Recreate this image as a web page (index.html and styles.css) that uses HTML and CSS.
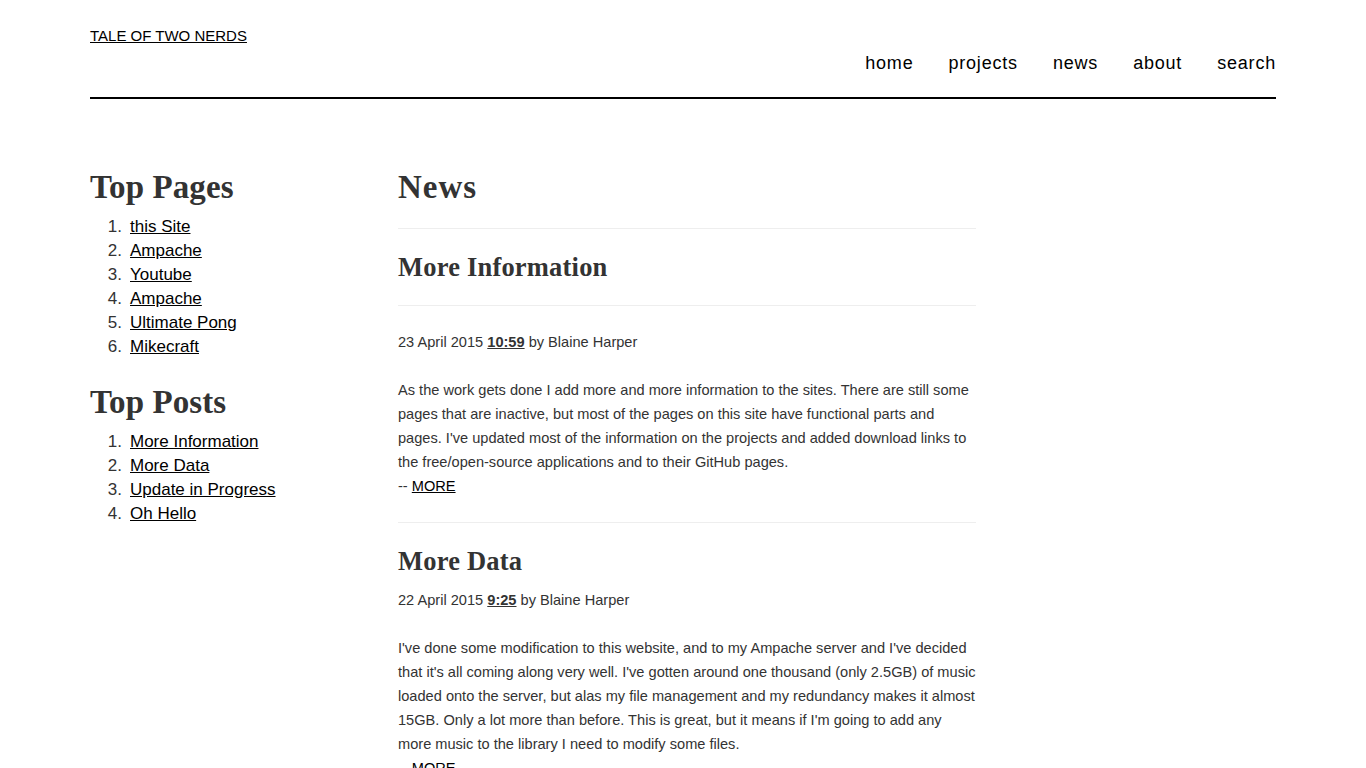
FILE: index.html
```html
<!DOCTYPE html>
<html lang="en">
<head>
<meta charset="utf-8">
<title>Tale of Two Nerds - News</title>
<link rel="stylesheet" href="styles.css">
</head>
<body>
<div class="page">
  <header class="site-header">
    <a class="logo" href="#">TALE OF TWO NERDS</a>
    <nav class="nav">
      <a href="#">home</a>
      <a href="#">projects</a>
      <a href="#">news</a>
      <a href="#">about</a>
      <a href="#">search</a>
    </nav>
  </header>
  <div class="layout">
    <aside class="sidebar">
      <h2 class="side-title">Top Pages</h2>
      <ol class="side-list">
        <li><a href="#">this Site</a></li>
        <li><a href="#">Ampache</a></li>
        <li><a href="#">Youtube</a></li>
        <li><a href="#">Ampache</a></li>
        <li><a href="#">Ultimate Pong</a></li>
        <li><a href="#">Mikecraft</a></li>
      </ol>
      <h2 class="side-title second">Top Posts</h2>
      <ol class="side-list">
        <li><a href="#">More Information</a></li>
        <li><a href="#">More Data</a></li>
        <li><a href="#">Update in Progress</a></li>
        <li><a href="#">Oh Hello</a></li>
      </ol>
    </aside>
    <main class="main">
      <h1 class="page-title">News</h1>
      <article class="post first">
        <h2 class="post-title">More Information</h2>
        <p class="meta">23 April 2015 <a href="#">10:59</a> by Blaine Harper</p>
        <p class="body">As the work gets done I add more and more information to the sites. There are still some pages that are inactive, but most of the pages on this site have functional parts and pages. I've updated most of the information on the projects and added download links to the free/open-source applications and to their GitHub pages.<br>-- <a href="#">MORE</a></p>
      </article>
      <article class="post">
        <h2 class="post-title">More Data</h2>
        <p class="meta">22 April 2015 <a href="#">9:25</a> by Blaine Harper</p>
        <p class="body">I've done some modification to this website, and to my Ampache server and I've decided that it's all coming along very well. I've gotten around one thousand (only 2.5GB) of music loaded onto the server, but alas my file management and my redundancy makes it almost 15GB. Only a lot more than before. This is great, but it means if I'm going to add any more music to the library I need to modify some files.<br>-- <a href="#">MORE</a></p>
      </article>
    </main>
  </div>
</div>
</body>
</html>
```
FILE: styles.css
```css
html, body {
  margin: 0;
  padding: 0;
  background: #fff;
}
body {
  font-family: "Liberation Sans", Arial, sans-serif;
  color: #333;
}
a {
  color: #000;
}
.page {
  margin: 0 90px;
}
.site-header {
  display: flex;
  justify-content: space-between;
  align-items: flex-start;
  padding-top: 28px;
  padding-bottom: 23px;
  border-bottom: 2px solid #000;
}
.logo {
  font-size: 15px;
  line-height: 16px;
  color: #000;
}
.nav {
  display: flex;
  gap: 35px;
  margin-top: 24px;
}
.nav a {
  font-size: 18px;
  line-height: 22px;
  letter-spacing: 0.8px;
  text-decoration: none;
  color: #000;
}
.layout {
  display: grid;
  grid-template-columns: 308px 578px;
  padding-top: 68px;
}
.side-title,
.page-title,
.post-title {
  font-family: "Liberation Serif", Georgia, serif;
  font-weight: bold;
  color: #333;
  margin: 0;
}
.side-title {
  font-size: 33px;
  line-height: 40px;
  letter-spacing: 0.1px;
}
.side-title.second {
  margin-top: 23px;
}
.side-list {
  list-style: none;
  margin: 8px 0 0;
  padding: 0;
  font-size: 17px;
  line-height: 24px;
  color: #333;
}
.side-list li {
  display: flex;
  counter-increment: item;
}
.side-list li::before {
  content: counter(item) ".";
  box-sizing: border-box;
  width: 40px;
  padding-right: 8px;
  text-align: right;
}
.page-title {
  font-size: 33px;
  line-height: 40px;
  letter-spacing: 1px;
  padding-bottom: 21px;
  border-bottom: 1px solid #eee;
}
.post {
  border-bottom: 1px solid #eee;
}
.post-title {
  font-size: 26.5px;
  line-height: 32px;
  letter-spacing: 0.2px;
  padding-top: 22px;
}
.post.first .post-title {
  padding-bottom: 22px;
  border-bottom: 1px solid #eee;
  margin-bottom: 24px;
}
.post:not(.first) .post-title {
  margin-bottom: 11px;
}
.meta {
  font-size: 14.6px;
  line-height: 24px;
  margin: 0 0 24px;
  color: #333;
}
.meta a {
  font-weight: bold;
  color: #333;
}
.body {
  font-size: 14.6px;
  line-height: 24px;
  margin: 0 0 24px;
  color: #333;
}
.body a {
  color: #000;
}
```
